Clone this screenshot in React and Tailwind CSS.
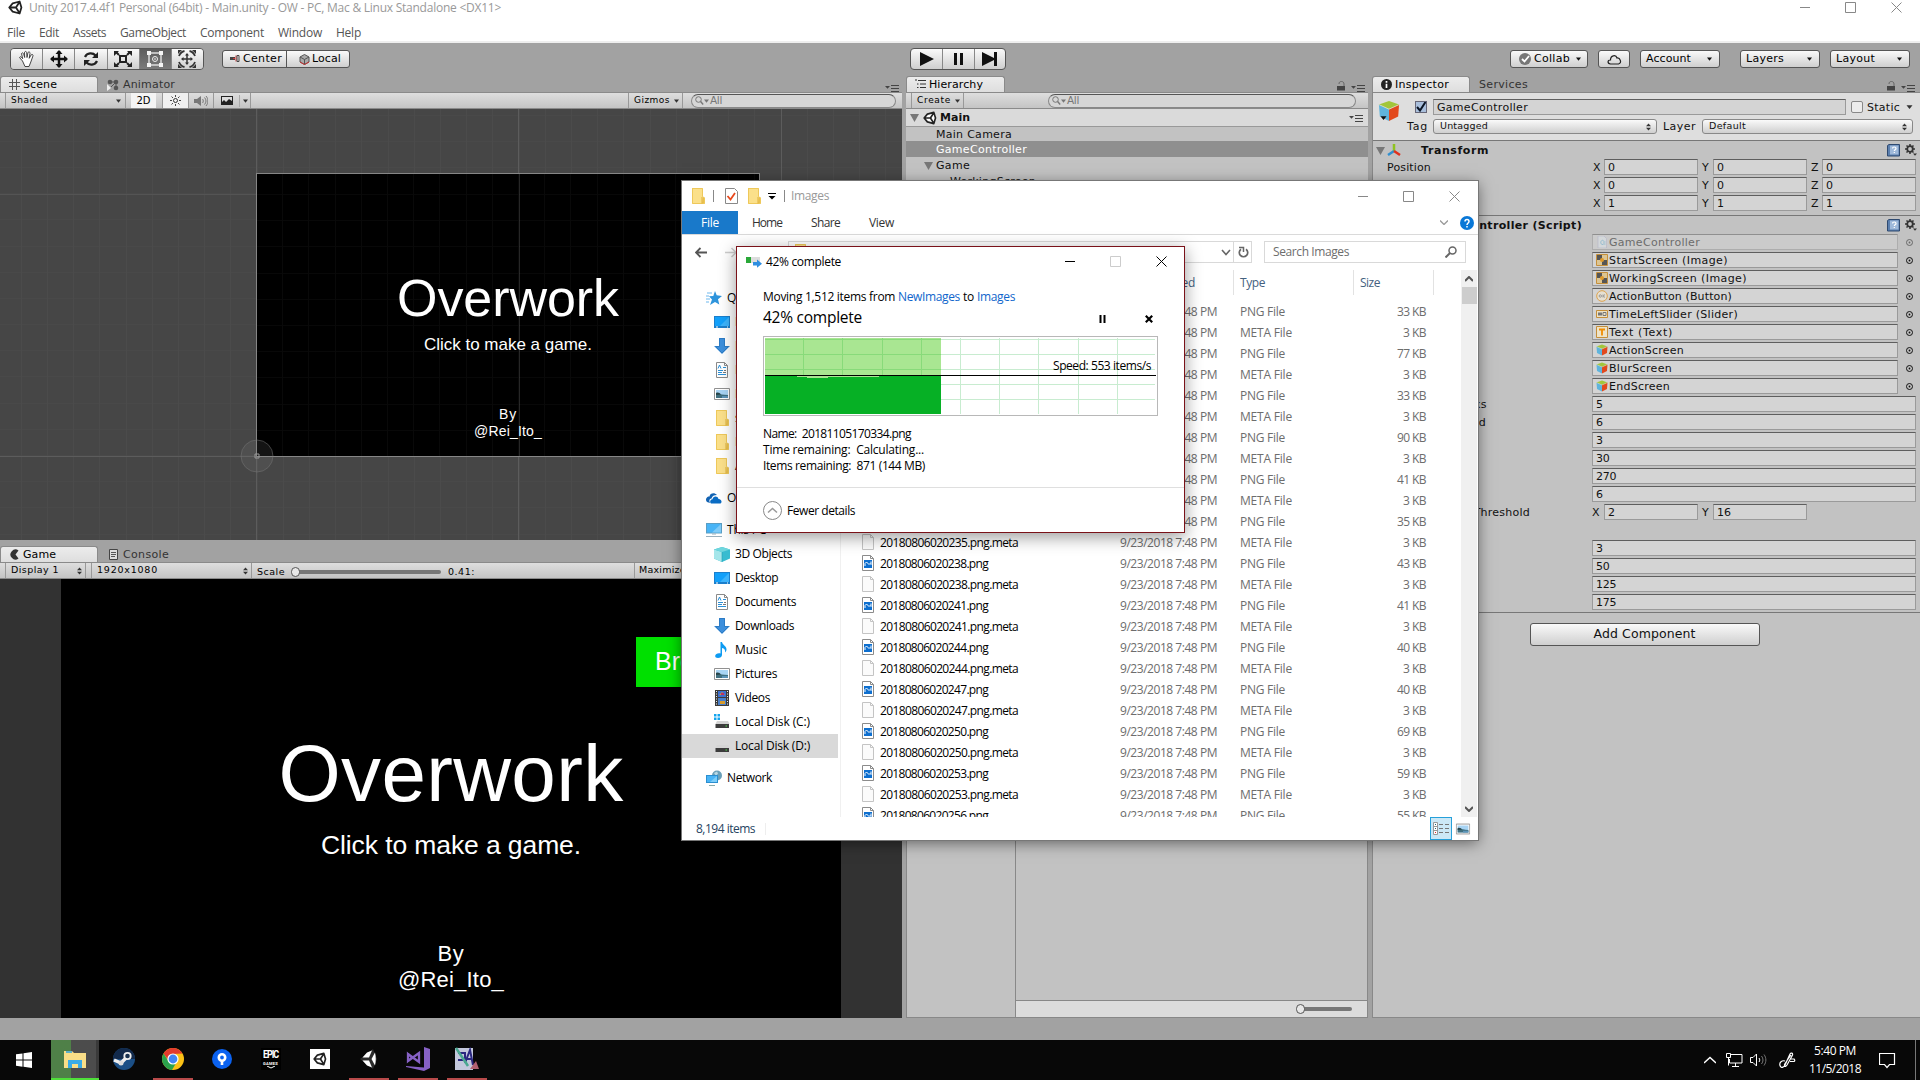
import React, { useLayoutEffect, useRef } from "react";

/* Text run whose letter spacing is tuned so the run fills `w` pixels. */
function Fit({ w, className = "", children }) {
  const ref = useRef(null);
  useLayoutEffect(() => {
    const el = ref.current;
    el.style.letterSpacing = "0px";
    const natural = el.getBoundingClientRect().width;
    el.style.letterSpacing = (w - natural) / el.textContent.length + "px";
  }, [w, children]);
  return (
    <span ref={ref} className={"inline-block shrink-0 whitespace-pre " + className}>
      {children}
    </span>
  );
}

/* ---------- small icons ---------- */
const Svg = ({ s = 16, h, vb, className = "", children }) => (
  <svg width={s} height={h || s} viewBox={vb || `0 0 ${s} ${h || s}`} className={"shrink-0 " + className} fill="none">
    {children}
  </svg>
);
const UnityLogo = ({ s = 16, c = "#222", bg = "none", className }) => (
  <Svg s={s} vb="0 0 16 16" className={className}>
    <path d="M1 8 5 3.2 13 1.2 15 8l-2 6.8L5 12.800z" fill={bg} />
    <path d="M1.300 8 5 3.600 12.400 1.600 14.300 8l-1.900 6.400L5 12.400zM1.300 8H8.500M8.500 8l3.900-6.200M8.500 8l3.900 6.200" stroke={c} strokeWidth="1.9" strokeLinejoin="round" />
  </Svg>
);
const Caret = ({ c = "#333", s = 5, className }) => (
  <Svg s={s} h={4} vb="0 0 6 4" className={className}><path d="M0 .3h6L3 4z" fill={c} /></Svg>
);
const UpDown = ({ className }) => (
  <Svg s={5} h={8} className={className}><path d="M0 3.300h5L2.500.5zM0 4.800h5L2.500 7.600z" fill="#333" /></Svg>
);
const PanelMenu = ({ className }) => (
  <Svg s={14} h={8} className={className}>
    <path d="M0 2h5L2.500 4.800z" fill="#444" /><path d="M6 1.500h8M6 4.500h8M6 7.500h8" stroke="#444" strokeWidth="1" />
  </Svg>
);
const Lock = ({ className }) => (
  <Svg s={8} h={10} className={className}><path d="M0 5h8v4.500H0z" fill="#444" /><path d="M2 3c0-2 1-2.500 2.500-2.500S7 1.500 7 3v2" stroke="#666" /></Svg>
);
const Glass = ({ className }) => (
  <Svg s={9} h={9} className={className}><circle cx="3.500" cy="3.500" r="2.800" stroke="#777" /><path d="m5.600 5.600 2.600 2.800" stroke="#777" strokeWidth="1.400" /></Svg>
);
const Cube = ({ s = 12, className }) => (
  <Svg s={s} vb="0 0 24 24" className={className}>
    <path d="M1 5 12 1l11 4-11 5z" fill="#a2c63a" /><path d="M1 5l11 5v13L2 18z" fill="#5fb4dc" /><path d="M23 5 12 10v13l10-5z" fill="#e2491d" />
    <path d="M1 5l11 5 11-5" stroke="#d8dcc0" strokeWidth="1" />
  </Svg>
);
const Folder = ({ s = 16, className }) => (
  <Svg s={s} vb="0 0 16 16" className={className}>
    <path d="M2 0h11v16H2z" fill="#fbe08a" /><path d="M13 9h1.500v7H12z" fill="#e8c04e" /><path d="M2 .5h10.500V8.500L14.500 10v5.500H2.500V.5z" stroke="#eec85a" />
    <path d="M12 9v6.500" stroke="#e0b23c" />
  </Svg>
);
const Monitor = () => (
  <Svg s={16}><path d="M0 2h16v12H0z" fill="#1b7fcc" /><path d="M1 3h14v9H1z" fill="#12a0fa" /><path d="M15 3v9H6z" fill="#3db4fc" /><path d="M2 13h2M13 13h1" stroke="#fff" /></Svg>
);
const Down = () => (
  <Svg s={16}><path d="M5 0h6v8h5l-8 8-8-8h5z" fill="#3d8fdc" /><path d="M5.500.5h5V8.500H14.500L8 15 1.500 8.500H5.500z" stroke="#2c7bc4" /></Svg>
);
const Doc = () => (
  <Svg s={16}><path d="M2.500.5h8l3 3v12h-11z" fill="#fff" stroke="#8a8a8a" /><path d="M10.500.5v3h3" stroke="#8a8a8a" /><path d="M4 6.500l1.500-3.500 1.500 3.500M9 5.500h3M4 8.500h5M4 10.500h4M4 12.500h8" stroke="#2b8fd6" /><path d="M10 8.500h2M9 10.500h3" stroke="#777" /></Svg>
);
const Pic = () => (
  <Svg s={16}><path d="M.5 2.500h15v11H.5z" fill="#fff" stroke="#919191" /><path d="M2 4h12v8H2z" fill="#a8d4f4" /><path d="M2 8c3-1 6 1 12 1v3H2z" fill="#3f6f7f" /><path d="M2 7c2-1 4 0 5 1.500L2 9z" fill="#27454a" /><path d="M8 10h6v2H8z" fill="#5b93b8" /></Svg>
);
const Music = () => (
  <Svg s={16}><path d="M6.500 0H8c.3 3 5 4 4.500 8-.5 1.500-1 2-1.500 2.500.5-2.500-.5-4-3-4.500V13c0 2-2 3-4 3-1.800 0-3-1-2.800-2.300C1.500 12 3.500 11 6.500 11.500z" fill="#0d9bf2" /></Svg>
);
const Video = () => (
  <Svg s={16}><path d="M1 0h14v16H1z" fill="#3a3a3a" /><path d="M4 1h8v6H4z" fill="#3c6fd0" /><path d="M4 8h8v7H4z" fill="#4a7fc8" /><path d="M5 5l3-3 3 3zM6 11h5v3H6z" fill="#d69a2c" /><path d="M7 3h3v2H7z" fill="#c03060" /><path d="M2.500 1v14M13.500 1v14" stroke="#eee" strokeDasharray="1 1.500" /></Svg>
);
const Cube3D = () => (
  <Svg s={16}><path d="M0 3.500 8 1l8 2.500v9L8 16l-8-3.500z" fill="#38bcd0" /><path d="M0 3.500 8 6v10l-8-3.500z" fill="#a5e6ea" /><path d="M0 3.500 8 1l8 2.500L8 6z" fill="#6fd6dd" /><path d="M8 6v10" stroke="#1f9db4" strokeWidth=".6" /></Svg>
);
const Disk = ({ win }) => (
  <Svg s={16}>
    {win && <path d="M0 0h2.500v2.500H0zM3.500 0H6v2.500H3.500zM0 3.500h2.500V6H0zM3.500 3.500H6V6H3.500z" fill="#12a4ee" />}
    <path d="M3 7h11l1.500 3h-14z" fill="#d4d4d4" /><path d="M1.500 10h13.500v4H1.500z" fill="#3c3c3c" /><path d="M11.500 12h1.500" stroke="#4fe04f" />
  </Svg>
);
const Pc = () => (
  <Svg s={16}><path d="M0 1h16v10.500H0z" fill="#5a9ec4" /><path d="M1 2h14v8.500H1z" fill="#48b4f6" /><path d="M15 2v8.500H6z" fill="#7fcbf8" /><path d="M6 12h4M0 14.500h16" stroke="#9ab0bd" /></Svg>
);
const Net = () => (
  <Svg s={16}><circle cx="11" cy="5.500" r="5" fill="#6a9fb8" /><path d="M8 3l3-1.500 1 2-2 2.500z" fill="#b9d8e4" /><path d="M0 5h12v8H0z" fill="#2b8fd0" /><path d="M1 6h10v6H1z" fill="#48b4f6" /><path d="M11 6v6H4z" fill="#7ccdf9" /><path d="M3 15.500h6" stroke="#8aa" /></Svg>
);
const Star = () => (
  <Svg s={16}><path d="M9 1l1.700 4.300L16 6l-4 3.200 1.300 5.300L9 12l-5 3 2-5.500L3 6.300 7.300 6z" fill="#2d94dc" /><path d="M1 3h5M0 6h3M0 9h4M0 12h3" stroke="#6cb8ee" /></Svg>
);
const OneDrive = () => (
  <Svg s={16}><path d="M1 12a3 3 0 0 1 0-4.500C2 6 3 6.500 3.500 6.500 4 3.500 8 2 11 5c-3 0-5 1-5.500 3.500C3 9 3 11 4 13z" fill="#1263b3" /><path d="M5 13.500c-2-2 0-4.500 1.500-4.200C7 6 11.500 5.500 12.500 9c3 0 4 3.500 2 4.500z" fill="#0a6cc4" /></Svg>
);
const PngFile = () => (
  <Svg s={12} h={16}><path d="M.5.5h8l3 3v12H.5z" fill="#fff" stroke="#8b8b8b" /><path d="M8.500.5v3h3" stroke="#8b8b8b" /><path d="M2 5h8v8H2z" fill="#0e6fcf" /><path d="M3 11V8.500l1.500-1.500L7 9.500l1-1L9 9.500V6.500" stroke="#fff" /></Svg>
);
const MetaFile = () => (
  <Svg s={12} h={16}><path d="M.5.5h8l3 3v12H.5z" fill="#fbfbfb" stroke="#c4c4c4" /><path d="M8.500.5v3h3" stroke="#c4c4c4" /></Svg>
);
const Gear = () => (
  <Svg s={12}><circle cx="5" cy="5" r="2.800" stroke="#333" strokeWidth="1.800" /><path d="M5 0v2M5 8v2M0 5h2M8 5h2M1.500 1.500l1.300 1.300M7.200 7.200 8.500 8.500M8.500 1.500 7.200 2.800M2.800 7.200 1.500 8.500" stroke="#333" strokeWidth="1.500" /><path d="M8 9.500h4l-2 2.300z" fill="#333" /></Svg>
);
const Book = () => (
  <Svg s={13}><path d="M.5 1.500 2 .5h10.500v11.500H.5z" fill="#5b7fae" stroke="#2f4a70" /><path d="M3 1.500h8.500v9H3z" fill="#9fb9da" /><path d="M5.500 4.500c0-2 3.500-2 3.500 0 0 1.300-1.700 1.200-1.700 2.500M7.300 8v1" stroke="#fff" strokeWidth="1.200" /></Svg>
);

/* ---------- Unity editor pieces ---------- */
const btn = "flex items-center border border-[#555] rounded-[3px] bg-linear-to-b from-[#fafafa] to-[#cfcfcf]";
const uni = "font-['DejaVu_Sans',sans-serif]";

/* Editor label: sits one pixel below the centre line of its row. */
const Label = ({ className = "", ...rest }) => <Fit className={"pt-[2px] " + className} {...rest} />;

function Tab({ icon, label, w, lw, active }) {
  return (
    <div className={(active ? "bg-linear-to-b from-[#ececec] to-[#dedede] border border-b-0 border-[#8a8a8a] rounded-t-[3px] text-black " : "pt-px pl-px text-[#333] ") + "flex h-4 shrink-0 items-center gap-1"}>
      <div className={"flex items-center pl-2 " + (active ? "gap-[3px]" : "gap-[4px]")} style={{ width: w }}>
        {icon}
        <Fit w={lw} className="text-[11px] leading-4">{label}</Fit>
      </div>
    </div>
  );
}

function Search({ className }) {
  return (
    <div className={"flex h-[14px] items-center rounded-full border border-[#888] border-t-[#555] bg-[#d6d6d6] pl-[3px] " + className}>
      <Glass /><Caret c="#777" s={5} />
      <Fit w={12} className="ml-px pb-px text-[10.500px] leading-3 text-[#777]">All</Fit>
    </div>
  );
}

const bar = "flex h-[17px] items-center border-t border-b border-[#8a8a8a] bg-linear-to-b from-[#dedede] to-[#c4c4c4] text-[10px]";

const tools = [
  <Svg s={20} key="hand"><path d="M5.500 12 2.500 8.500c.5-1.300 2-.8 3.200 1.200L4.500 4.500c.7-1.200 2-.5 2.200.8l1 3.200L7.500 3.200c.8-1.200 2-.7 2.200.3l.3 5 1-5c.8-1 2.200-.5 2 .8l-.8 5 2-3.500c1-.8 2-.2 1.800 1L13.800 13l-1.800 4.500H8z" fill="#fff" stroke="#333" strokeWidth=".9" /></Svg>,
  <Svg s={20} key="move"><path d="M10 2v16M2 10h16" stroke="#111" strokeWidth="2.500" /><path d="m10 1 3.500 4h-7zM10 19l3.500-4h-7zM1 10l4-3.500v7zM19 10l-4-3.500v7z" fill="#111" /></Svg>,
  <Svg s={20} key="rot"><path d="M4 8c2-4.500 8-4.500 10.500-1.500M16 12c-2 4.500-8 4.500-10.500 1.500" stroke="#222" strokeWidth="2.200" /><path d="M17 3v6h-6zM3 17v-6h6z" fill="#222" /></Svg>,
  <Svg s={20} key="scale"><path d="M7 7h6v6H7zM3 3l3 3M17 3l-3 3M3 17l3-3M17 17l-3-3" stroke="#222" strokeWidth="2" /><path d="M1 2h5L1 7zM19 2h-5l5 5zM1 18h5l-5-5zM19 18h-5l5-5z" fill="#222" /></Svg>,
  <Svg s={20} key="rect"><path d="M4 4h12v12H4z" stroke="#ddd" strokeWidth="1.500" /><path d="M2 2h4v4H2zM14 2h4v4h-4zM2 14h4v4H2zM14 14h4v4h-4z" fill="#f4f4f4" /><circle cx="10" cy="10" r="2.500" stroke="#eee" /><circle cx="10" cy="10" r=".8" fill="#fff" /></Svg>,
  <Svg s={20} key="all"><path d="M10 5v10M5 10h10" stroke="#333" strokeWidth="1.500" /><path d="m10 4 2 2.500h-4zM10 16l2-2.500h-4zM4 10l2.500-2v4zM16 10l-2.500-2v4z" fill="#333" /><path d="M2 7c1-2.500 3-4.500 5.500-5M18 7c-1-2.500-3-4.500-5.500-5M2 13c1 2.500 3 4.500 5.500 5M18 13c-1 2.500-3 4.500-5.500 5" stroke="#333" strokeWidth="1.800" /><path d="M1 1h4L1 5zM19 1h-4l4 4zM1 19h4l-4-4zM19 19h-4l4-4z" fill="#333" /></Svg>,
];

function TopBar() {
  return (
    <div className={"flex h-[33px] shrink-0 items-start pt-[5px] " + uni}>
      <div className="ml-[10px] flex h-[22px] w-[194px] overflow-hidden rounded-[4px] border border-[#555]">
        {tools.map((t, i) => (
          <div key={i} className={"flex flex-1 items-center justify-center " + (i ? "border-l border-[#888] " : "") + (i === 4 ? "bg-linear-to-b from-[#5c5c5c] to-[#7a7a7a]" : "bg-linear-to-b from-[#fafafa] to-[#cfcfcf]")}>{t}</div>
        ))}
      </div>
      <div className={btn + " mt-[2px] ml-[18px] h-[18px] w-[128px]"}>
        <div className="flex h-full w-[64px] items-center border-r border-[#555] pl-[7px]">
          <Svg s={10} h={8}><path d="M0 2h5v3H0z" fill="#444" /><path d="M6 .5v6M5 3.500H3" stroke="#c33" /><path d="M7 .5h2v6H7z" stroke="#444" /></Svg>
          <Fit w={39} className="ml-[3px] text-[11px]">Center</Fit>
        </div>
        <Svg s={11} className="ml-3"><path d="M1 3 5.500.5 10 3v5l-4.500 2.500L1 8z" fill="#aaa" stroke="#555" /><path d="M1 3l4.500 2.500L10 3M5.500 5.500v5" stroke="#555" /><path d="M1 8l4.500 2.500L10 8" stroke="#c33" /></Svg>
        <Fit w={29} className="ml-[2px] text-[11px]">Local</Fit>
      </div>
      <div className="ml-[560px] flex h-[22px] w-[96px] overflow-hidden rounded-[4px] border border-[#555] bg-linear-to-b from-[#fafafa] to-[#cfcfcf]">
        <div className="flex w-[32px] items-center justify-center border-r border-[#888]"><Svg s={14}><path d="M0 0v14l14-7z" fill="#111" /></Svg></div>
        <div className="flex w-[32px] items-center justify-center border-r border-[#888]"><Svg s={14}><path d="M2 1h3v12H2zM8 1h3v12H8z" fill="#111" /></Svg></div>
        <div className="flex flex-1 items-center justify-center"><Svg s={16} h={14}><path d="M0 0v14l12-6V14h3V0h-3v6z" fill="#111" /></Svg></div>
      </div>
      <div className={btn + " mt-[2px] ml-[504px] h-[18px] w-[78px] pl-2"}>
        <Svg s={12}><circle cx="6" cy="6" r="6" fill="#777" /><path d="m3 6 2.500 2.500L10 3" stroke="#fff" strokeWidth="1.800" /></Svg>
        <Fit w={36} className="ml-[3px] text-[11px]">Collab</Fit><Caret className="ml-[6px]" c="#111" />
      </div>
      <div className={btn + " mt-[2px] ml-[10px] h-[18px] w-[32px] justify-center"}>
        <Svg s={15} h={11}><path d="M3.500 10C0 9.500.5 6 3.500 6 3.500 1 9 .5 10 4c3-.5 5.500 5 1.500 6z" stroke="#222" strokeWidth="1.200" /></Svg>
      </div>
      {[["Account", 45, "ml-[10px]"], ["Layers", 38, "ml-5"], ["Layout", 39, "ml-[10px]"]].map(([t, w, m]) => (
        <div key={t} className={btn + " mt-[2px] h-[18px] w-[80px] justify-between pr-[7px] pl-[5px] " + m}>
          <Fit w={w} className="text-[11px]">{t}</Fit><Caret c="#111" />
        </div>
      ))}
    </div>
  );
}

function Scene() {
  return (
    <>
      <div className="flex h-4">
        <Tab active w={96} lw={34} label="Scene" icon={<Svg s={11}><path d="M3.500 0v11M7.500 0v11M0 3.500h11M0 7.500h11" stroke="#555" /></Svg>} />
        <Tab w={90} lw={52} label="Animator" icon={<Svg s={12}><circle cx="3" cy="3" r="2.300" fill="#555" /><circle cx="9" cy="3" r="2.300" fill="#555" /><circle cx="9" cy="9" r="2.300" fill="#555" /><path d="M3 3h6v6M4 8l5-5" stroke="#555" /><path d="M0 5l4 4-4 3z" fill="#eee" /></Svg>} />
        <div className="flex-1" />
        <PanelMenu className="mt-2 mr-[3px]" />
      </div>
      <div className={bar}>
        <div className="ml-[5px] flex h-full w-[121px] items-center justify-between border-x border-[#999] pr-1 pl-[5px]">
          <Fit w={37} className="text-[9px] text-black">Shaded</Fit><Caret />
        </div>
        <div className="ml-[5px] flex h-full w-[25px] items-center justify-center bg-[#f4f4f4]"><Fit w={14} className="text-[10px]">2D</Fit></div>
        <div className="ml-[6px] flex h-full w-[26px] items-center justify-center border-l border-[#999] bg-[#f0f0f0]">
          <Svg s={11}><circle cx="5.500" cy="5.500" r="2" stroke="#333" /><path d="M5.500 0v2M5.500 9v2M0 5.500h2M9 5.500h2M1.500 1.500 3 3M8 8l1.500 1.500M9.500 1.500 8 3M3 8 1.500 9.500" stroke="#333" strokeWidth=".9" /></Svg>
        </div>
        <div className="flex h-full w-[26px] items-center justify-center border-x border-[#999]">
          <Svg s={14} h={12}><path d="M0 4h3l4-3v10L3 8H0z" fill="#777" /><path d="M8.500 4c1 1 1 3 0 4M10.500 2.500c2 2 2 5 0 7M12 1c2.500 3 2.500 7 0 10" stroke="#777" /></Svg>
        </div>
        <div className="flex h-full w-[37px] items-center border-r border-[#999] pl-[7px]">
          <Svg s={12} h={10}><path d="M0 0h12v9H0z" fill="#222" /><path d="M1 1h10v4L8 3 5 6 3 4 1 6z" fill="#ddd" /></Svg>
          <div className="mr-[3px] ml-[6px] h-3 w-px bg-[#aaa]" /><Caret />
        </div>
        <div className="flex-1" />
        <div className="mr-2 flex h-full w-[55px] items-center gap-[4px] border-x border-[#999] pl-[5px]">
          <Fit w={36} className="text-[9px]">Gizmos</Fit><Caret />
        </div>
        <Search className="mr-[6px] w-[205px]" />
      </div>
      <div className="relative h-[431px] overflow-hidden bg-[#464646] bg-[repeating-linear-gradient(to_right,transparent_0_20.700px,#4b4b4b_20.700px_21.700px,transparent_21.700px_26.200px),repeating-linear-gradient(to_bottom,transparent_0_5.500px,#494949_5.500px_6.500px,transparent_6.500px_26.200px)] pt-[64px] pl-[256px]">
        <div className="absolute top-0 left-[256px] h-full w-px bg-[#5c5c5c]" />
        <div className="absolute top-0 left-[518px] h-full w-px bg-[#5c5c5c]" />
        <div className="absolute top-0 left-[781px] h-full w-px bg-[#5c5c5c]" />
        <div className="absolute top-[85px] left-0 h-px w-full bg-[#545454]" />
        <div className="absolute top-[347px] left-0 h-px w-full bg-[#5c5c5c]" />
        <div className="relative flex h-[284px] w-[504px] flex-col items-center border border-[#868686] bg-black bg-[repeating-linear-gradient(to_right,transparent_0_25.200px,#090909_25.200px_26.200px),repeating-linear-gradient(to_bottom,transparent_0_20px,#080808_20px_21px,transparent_21px_26.200px)] pt-[94px] font-['Liberation_Sans',sans-serif] text-white">
          <Fit w={222} className="text-[52px] leading-[60px]">Overwork</Fit>
          <Fit w={168} className="mt-[7px] text-[17px] leading-5">Click to make a game.</Fit>
          <Fit w={18} className="mt-[51px] text-[14px] leading-[17px]">By</Fit>
          <Fit w={68} className="text-[14px] leading-[17px]">@Rei_Ito_</Fit>
          <div className="absolute top-0 left-[262px] h-full w-px bg-white/15" />
        </div>
        <Svg s={34} className="absolute top-[330px] left-[240px]"><circle cx="17" cy="17" r="16" fill="#888" fillOpacity=".15" stroke="#777" strokeOpacity=".5" /><path d="M15 15h4v4h-4z" stroke="#999" /></Svg>
      </div>
    </>
  );
}

function Game() {
  return (
    <>
      <div className="mt-[6px] flex h-4">
        <Tab active w={96} lw={33} label="Game" icon={<Svg s={11}><path d="M9.500 1.500A5 5 0 1 0 9.500 9.500L6.500 5.500z" fill="#333" /></Svg>} />
        <Tab w={90} lw={46} label="Console" icon={<Svg s={12}><path d="M2.500.5h8v10h-8z" fill="#ddd" stroke="#444" /><path d="M4 3.500h5M4 5.500h5M4 7.500h4" stroke="#555" /></Svg>} />
      </div>
      <div className={bar}>
        <div className="ml-[5px] flex h-full w-[81px] items-center justify-between border-x border-[#999] pr-[3px] pl-[5px]"><Fit w={48} className="text-[9.500px]">Display 1</Fit><UpDown /></div>
        <div className="ml-[5px] flex h-full w-[161px] items-center justify-between border-x border-[#999] pr-[3px] pl-[5px]"><Fit w={61} className="text-[9.500px]">1920x1080</Fit><UpDown /></div>
        <Fit w={28} className="mt-[3px] ml-[5px] text-[9.500px]">Scale</Fit>
        <div className="relative mt-[3px] ml-[7px] h-1 w-[149px] rounded bg-[#777]"><div className="absolute -top-[3px] -left-px h-[10px] w-[9px] rounded-full border border-[#555] bg-[#e8e8e8]" /></div>
        <Fit w={27} className="mt-[3px] ml-[7px] text-[9.500px]">0.41:</Fit>
        <div className="ml-auto flex h-full w-[268px] items-center border-l border-[#999] pl-1"><Fit w={88} className="text-[9.500px]">Maximize On Play</Fit></div>
      </div>
      <div className="flex h-[439px] bg-[#323232] pl-[61px]">
        <div className="relative flex w-[780px] flex-col items-center bg-black pt-[150px] font-['Liberation_Sans',sans-serif] text-white">
          <div className="absolute top-[58px] right-[65px] flex h-[50px] w-[140px] items-center bg-[#00e000] pl-[19px] text-[25px]">Break</div>
          <Fit w={345} className="text-[80px] leading-[90px]">Overwork</Fit>
          <Fit w={260} className="mt-[11px] text-[26.500px] leading-[30px]">Click to make a game.</Fit>
          <Fit w={27} className="mt-[81px] text-[22px] leading-[26px]">By</Fit>
          <Fit w={106} className="text-[22px] leading-[26px]">@Rei_Ito_</Fit>
        </div>
      </div>
    </>
  );
}

function Middle() {
  return (
    <div className="ml-1 flex h-[942px] w-[462px] shrink-0 flex-col">
      <div className="flex h-4">
        <Tab active w={97} lw={54} label="Hierarchy" icon={<Svg s={11}><path d="M0 1h2M3 1.500h8M5 5h6M5 8.500h6M2 5h1.500M2 8.500h1.500" stroke="#333" /></Svg>} />
        <div className="flex-1" /><Lock className="mt-[5px]" /><PanelMenu className="mt-2 mr-[3px] ml-[6px]" />
      </div>
      <div className={bar}>
        <div className="ml-[5px] flex h-full w-[53px] items-center gap-[4px] border-x border-[#999] pl-[5px]"><Fit w={34} className="text-[9px]">Create</Fit><Caret /></div>
        <Search className="ml-auto mr-3 w-[308px]" />
      </div>
      <div className="flex h-[431px] flex-col bg-[#c2c2c2] text-[11px] text-[#111]">
        <div className="flex h-[18px] items-center border-b border-[#999] bg-[#dadada] pl-1">
          <Svg s={9}><path d="M0 1h9L4.500 9z" fill="#777" /></Svg><UnityLogo s={14} className="ml-[4px]" bg="#fff" />
          <Label w={30} className="ml-[3px] font-bold">Main</Label><PanelMenu className="mr-[5px] ml-auto" />
        </div>
        <div className="flex h-[14px] items-center pl-[30px]"><Label w={76}>Main Camera</Label></div>
        <div className="flex h-4 items-center bg-[#8f8f8f] pl-[30px] text-white"><Label w={91}>GameController</Label></div>
        <div className="flex h-4 items-center pl-[18px]"><Svg s={9}><path d="M0 1h9L4.500 9z" fill="#777" /></Svg><Label w={34} className="ml-[3px]">Game</Label></div>
        <div className="flex h-4 items-center pl-[44px]"><Label w={86}>WorkingScreen</Label></div>
      </div>
      <div className="mt-[22px] flex flex-1 border border-[#888] bg-[#c2c2c2]">
        <div className="w-[109px] border-r border-[#888]" />
        <div className="flex flex-1 flex-col justify-end">
          <div className="flex h-[17px] items-center justify-end border-t border-[#888] bg-[#dcdcdc] pr-[15px]">
            <div className="relative h-1 w-[52px] rounded bg-[#777]"><div className="absolute -top-[3px] -left-[4px] h-[10px] w-[9px] rounded-full border border-[#555] bg-[#e8e8e8]" /></div>
          </div>
        </div>
      </div>
    </div>
  );
}

const field = "flex h-4 items-center border border-[#9a9a9a] border-t-[#5e5e5e] bg-[#d4d4d4] pl-[3px] text-[11px] text-[#111]";
const numW = (t) => String(t).length * 6.8;

const ScriptIcon = <Svg s={12}><path d="M2 0h6l2.500 2.500V12H2z" fill="#e6eef2" stroke="#aac" strokeWidth=".6" /><path d="M7.500 4.500c-3-1.500-4 4.500-.5 4M7 6h2.500M7 8h2.500" stroke="#6fb8dc" /></Svg>;
const ImageIcon = <Svg s={12}><path d="M.5.500h11v11H.5z" fill="#dcc593" stroke="#c58f3a" /><path d="M1 1h5v5H1zM6 6h5v5H6z" fill="#555" /><circle cx="6" cy="6" r="2" fill="#e09a2a" /></Svg>;
const BtnIcon = <Svg s={12}><circle cx="6" cy="6" r="5.300" stroke="#dda24c" fill="#e6e0d2" /><circle cx="4.300" cy="6" r="1.200" stroke="#888" strokeWidth=".8" /><path d="M7 4.500v3M9 4.500 7.300 6 9 7.500" stroke="#888" strokeWidth=".8" /></Svg>;
const SliderIcon = <Svg s={12}><path d="M.5 2.500h11v7H.5z" fill="#eee3c8" stroke="#c58f3a" /><path d="M2 4.500h4v3H2z" fill="#777" /><path d="M7 4.500h3v3H7z" stroke="#777" /></Svg>;
const TextIcon = <Svg s={12}><path d="M.5.5h11v11H.5z" fill="#eee3c8" stroke="#c58f3a" /><path d="M3 3.500h6M6 3v6.500" stroke="#f08c00" strokeWidth="1.800" /></Svg>;

const objects = [
  ["GameController", 91, ScriptIcon], ["StartScreen (Image)", 119, ImageIcon], ["WorkingScreen (Image)", 138, ImageIcon],
  ["ActionButton (Button)", 123, BtnIcon], ["TimeLeftSlider (Slider)", 129, SliderIcon], ["Text (Text)", 64, TextIcon],
  ["ActionScreen", 75, <Cube key="a" />], ["BlurScreen", 63, <Cube key="b" />], ["EndScreen", 61, <Cube key="c" />],
];
const values = [["5", "Max Tasks", 60], ["6", "Tasks Needed", 90], ["3", ""], ["30", ""], ["270", ""], ["6", ""]];

function NumRow({ label, value, lw }) {
  return (
    <div className="mb-[2px] flex h-4">
      <div className="flex w-[220px] shrink-0 items-center pl-[15px] text-[11px]">{label && <div className="flex w-[100px] justify-end"><Label w={lw}>{label}</Label></div>}</div>
      <div className={field + " w-[324px]"}><Label w={numW(value)}>{value}</Label></div>
    </div>
  );
}

function Inspector() {
  return (
    <div className="ml-1 flex h-[942px] w-[548px] shrink-0 flex-col">
      <div className="flex h-4">
        <Tab active w={96} lw={54} label="Inspector" icon={<Svg s={11}><circle cx="5.500" cy="5.500" r="5.500" fill="#222" /><path d="M5.500 2v1.700M5.500 4.800v4.200" stroke="#fff" strokeWidth="1.700" /></Svg>} />
        <Tab w={80} lw={49} label="Services" />
        <div className="flex-1" /><Lock className="mt-[5px]" /><PanelMenu className="mt-2 mr-[5px] ml-[6px]" />
      </div>
      <div className="flex flex-1 flex-col border border-r-0 border-[#888] bg-[#c2c2c2] text-[11px] text-[#111]">
        <div className="flex h-12 border-b border-[#777] bg-[#dedede]">
          <div className="relative mt-[7px] ml-[5px] w-[37px]"><Cube s={22} /><Caret className="absolute top-[16px] left-[2px]" c="#111" s={7} /></div>
          <div className="flex flex-1 flex-col">
            <div className="mt-[6px] flex h-4 items-center">
              <div className="flex h-3 w-3 items-center justify-center border border-[#667] bg-[#a9bfdc]"><Svg s={10}><path d="m1 5 3 3.500L9.500 0" stroke="#0b1524" strokeWidth="2" /></Svg></div>
              <div className={field + " ml-[6px] w-[413px]"}><Label w={91}>GameController</Label></div>
              <div className="ml-[5px] h-3 w-3 rounded-[2px] border border-[#888] bg-[#ececec]" />
              <Label w={33} className="ml-[4px]">Static</Label><Caret className="ml-[5px]" s={9} />
            </div>
            <div className="mt-1 -ml-2 flex h-[15px] items-center">
              <Label w={21}>Tag</Label>
              <div className={btn + " ml-[5px] h-[15px] w-[224px] justify-between border-[#888] pr-[5px] pl-[6px] text-[9.500px]"}><Fit w={48}>Untagged</Fit><UpDown /></div>
              <Label w={33} className="ml-[6px]">Layer</Label>
              <div className={btn + " ml-[6px] h-[15px] w-[211px] justify-between border-[#888] pr-[5px] pl-[6px] text-[9.500px]"}><Fit w={37}>Default</Fit><UpDown /></div>
            </div>
          </div>
        </div>
        <div className="flex h-[18px] items-center pl-[3px]">
          <Svg s={9}><path d="M0 1h9L4.500 9z" fill="#777" /></Svg>
          <Svg s={14} className="ml-[2px]"><path d="M7 8V1" stroke="#8fc31f" strokeWidth="2.500" /><path d="m7 8-6 4" stroke="#2f8fd0" strokeWidth="2.500" /><path d="m7 8 6 4" stroke="#e0301e" strokeWidth="2.500" /></Svg>
          <Label w={68} className="ml-[20px] font-bold">Transform</Label>
          <div className="mr-[3px] ml-auto flex gap-[5px]"><Book /><Gear /></div>
        </div>
        {[["Position", 44, 0], ["Rotation", 46, 0], ["Scale", 28, 1]].map(([l, w, v]) => (
          <div key={l} className="mb-[2px] flex h-4 items-center">
            <div className="w-[220px] pl-[14px]"><Label w={w}>{l}</Label></div>
            {["X", "Y", "Z"].map((a) => (
              <div key={a} className="mr-[4px] flex w-[105px] items-center"><Label w={8} className="mr-[3px]">{a}</Label><div className={field + " flex-1"}><Label w={7}>{v}</Label></div></div>
            ))}
          </div>
        ))}
        <div className="mt-[2px] flex h-[19px] items-center border-t border-[#777] pl-[49px]">
          <Label w={160} className="font-bold">Game Controller (Script)</Label>
          <div className="mr-[3px] ml-auto flex gap-[5px]"><Book /><Gear /></div>
        </div>
        {objects.map(([t, w, ic], i) => (
          <div key={t} className={"mb-[2px] flex h-4 shrink-0 items-center pl-[219px] " + (i === 0 ? "opacity-50" : "")}>
            <div className={field + " w-[306px] gap-px"}>{ic}<Label w={w}>{t}</Label></div>
            <Svg s={9} className="ml-[7px]"><circle cx="4.500" cy="4.500" r="3" stroke="#111" /><circle cx="4.500" cy="4.500" r=".9" fill="#111" /></Svg>
          </div>
        ))}
        {values.map(([v, l, w], i) => <div key={i} className="-ml-px"><NumRow value={v} label={l} lw={w} /></div>)}
        <div className="mb-5 flex h-4 items-center">
          <div className="flex w-[219px] shrink-0 pl-[64px]"><Label w={93}>Break Threshold</Label></div>
          <Label w={8} className="mr-1">X</Label><div className={field + " w-[94px]"}><Label w={7}>2</Label></div>
          <Label w={8} className="mr-[3px] ml-[4px]">Y</Label><div className={field + " w-[94px]"}><Label w={14}>16</Label></div>
        </div>
        {["3", "50", "125", "175"].map((v) => <div key={v} className="-ml-px"><NumRow value={v} /></div>)}
        <div className="flex justify-center border-t border-[#777] pt-[10px] pr-1">
          <div className={btn + " h-[23px] w-[230px] justify-center text-[12.500px]"}><Fit w={102}>Add Component</Fit></div>
        </div>
      </div>
    </div>
  );
}

/* ---------- Windows pieces ---------- */
const seg = "font-['Open_Sans','Noto_Sans',sans-serif]";

function WinButtons({ c, className, dim }) {
  return (
    <div className={"flex items-center gap-[35px] " + className}>
      <Svg s={10} h={11}><path d="M0 5.500h10" stroke={c} /></Svg>
      <Svg s={11}><path d="M.5.500h10v10H.5z" stroke={dim || c} /></Svg>
      <Svg s={11}><path d="m.5.500 10 10M10.500.5l-10 10" stroke={c} /></Svg>
    </div>
  );
}

const nav = [
  ["Quick access", 65, <Star />, 0, 0], ["Desktop", 42, <Monitor />, 1, 0], ["Downloads", 59, <Down />, 1, 0], ["Documents", 61, <Doc />, 1, 0],
  ["Pictures", 42, <Pic />, 1, 0], ["screens", 40, <Folder />, 1, 0], ["Images", 38, <Folder />, 1, 0], ["Assets", 36, <Folder />, 1, 0],
  ["OneDrive", 50, <OneDrive />, 0, 1], ["This PC", 39, <Pc />, 0, 1], ["3D Objects", 57, <Cube3D />, 1, 0], ["Desktop", 43, <Monitor />, 1, 0],
  ["Documents", 61, <Doc />, 1, 0], ["Downloads", 59, <Down />, 1, 0], ["Music", 32, <Music />, 1, 0], ["Pictures", 42, <Pic />, 1, 0],
  ["Videos", 35, <Video />, 1, 0], ["Local Disk (C:)", 75, <Disk win />, 1, 0], ["Local Disk (D:)", 75, <Disk />, 1, 0], ["Network", 45, <Net />, 0, 1],
];
const sizes = [33, 77, 33, 90, 41, 35, 43, 41, 40, 40, 69, 59, 55];
const files = sizes.flatMap((s, i) => {
  const n = "201808060202" + (20 + i * 3);
  return [[n + ".png", 108, "PNG File", 45, s + " KB"], [n + ".png.meta", 138, "META File", 52, "3 KB"]];
}).slice(0, 25);

function Explorer() {
  return (
    <div className={"absolute top-[181px] left-[682px] flex h-[659px] w-[796px] flex-col bg-white text-[12px] shadow-[0_0_0_1px_#777,0_3px_14px_rgba(0,0,0,.5)] " + seg}>
      <div className="flex h-[30px] items-center pl-2">
        <Folder /><div className="ml-[7px] h-3 w-px bg-[#888]" />
        <Svg s={13} h={16} className="ml-[11px]"><path d="M.5.500h9l3 3v12H.5z" fill="#fff" stroke="#888" /><path d="m2.500 8 3 3.500L10 5" stroke="#e8481c" strokeWidth="1.800" /></Svg>
        <Folder className="ml-[8px]" />
        <Svg s={8} h={7} className="ml-[6px]"><path d="M0 .5h8" stroke="#000" /><path d="M.5 3h7L4 6.500z" fill="#000" /></Svg>
        <div className="ml-2 h-3 w-px bg-[#888]" />
        <Fit w={38} className="ml-[6px] text-[#999]">Images</Fit>
        <WinButtons c="#888" className="mr-[18px] ml-auto" />
      </div>
      <div className="flex h-6 shrink-0 items-center border-b border-[#dadada] text-[#333]">
        <div className="flex h-[23px] w-14 items-center justify-center bg-[#1979ca] pt-px text-white"><Fit w={18}>File</Fit></div>
        <Fit w={30} className="ml-[14px] pt-px">Home</Fit><Fit w={29} className="ml-[29px] pt-px">Share</Fit><Fit w={25} className="ml-[29px] pt-px">View</Fit>
        <Svg s={8} h={5} className="mr-3 ml-auto"><path d="m0 .5 4 4 4-4" stroke="#999" strokeWidth="1.300" /></Svg>
        <Svg s={14} className="mr-[4px]"><circle cx="7" cy="7" r="7" fill="#0a78d7" /><path d="M5 5.500c0-2.700 4-2.700 4 0C9 7 7 7 7 9M7 10v1.500" stroke="#fff" strokeWidth="1.500" /></Svg>
      </div>
      <div className="mt-[6px] flex h-[22px] shrink-0 items-center">
        <Svg s={12} h={11} className="ml-[13px]"><path d="M12 5.500H1M5.500 1 1 5.500 5.500 10" stroke="#555" strokeWidth="1.800" /></Svg>
        <Svg s={12} h={11} className="ml-[18px]"><path d="M0 5.500h11M6.500 1 11 5.500 6.500 10" stroke="#ccc" strokeWidth="1.500" /></Svg>
        <div className="ml-[51px] flex h-[22px] w-[464px] items-center border border-[#d9d9d9] pl-1">
          <Folder s={16} />
          <Svg s={10} h={7} className="mr-[2px] ml-auto"><path d="m1 1 4 4.500L9 1" stroke="#666" strokeWidth="1.600" /></Svg>
          <div className="h-full w-px bg-[#d9d9d9]" />
          <Svg s={11} h={13} className="mr-[2px] ml-[4px]"><path d="M8 3.200A4.200 4.200 0 1 1 3 3.200" stroke="#666" strokeWidth="1.700" /><path d="M1 1.500h4.500V6" stroke="#666" strokeWidth="1.500" /></Svg>
        </div>
        <div className="ml-3 flex h-[22px] w-[202px] items-center justify-between border border-[#d9d9d9] pr-2 pl-2 text-[#6d6d6d]">
          <Fit w={76}>Search Images</Fit>
          <Svg s={12}><circle cx="7.500" cy="4.500" r="3.500" stroke="#666" strokeWidth="1.500" /><path d="M5 7 .5 11.500" stroke="#666" strokeWidth="2" /></Svg>
        </div>
      </div>
      <div className="mt-[7px] flex h-[547px] shrink-0">
        <div className="flex h-full w-[159px] shrink-0 flex-col border-r border-[#f0f0f0] pt-4 text-black">
          {nav.map(([t, w, ic, sub, gap], i) => (
            <div key={i} className={"flex h-6 w-[156px] shrink-0 items-center " + (sub ? "gap-[5px] pl-8 " : "gap-[5px] pl-6 ") + (gap ? "mt-2 " : "") + (i === 18 ? "bg-[#d9d9d9]" : "")}>
              {ic}<Fit w={w}>{t}</Fit>
            </div>
          ))}
        </div>
        <div className="flex h-full w-[621px] flex-col overflow-hidden">
          <div className="flex h-[25px] shrink-0 items-center text-[#44617f]">
            <div className="flex h-full w-[270px] items-center pl-[39px]"><Fit w={30}>Name</Fit></div>
            <div className="flex h-full w-[123px] items-center border-r border-[#e2e2e2] pl-[9px]"><Fit w={75}>Date modified</Fit></div>
            <div className="flex h-full w-[120px] items-center border-r border-[#e2e2e2] pl-[6px]"><Fit w={25}>Type</Fit></div>
            <div className="flex h-full w-[80px] items-center border-r border-[#e2e2e2] pl-[6px]"><Fit w={20}>Size</Fit></div>
          </div>
          <div className="pt-[5px]">
            {files.map(([n, nw, ty, tw, s], i) => (
              <div key={i} className="flex h-[21px] items-center text-[#6d6d6d]">
                <div className="flex w-[279px] items-center gap-[6px] pl-[21px] text-black">{i % 2 ? <MetaFile /> : <PngFile />}<Fit w={nw} className="pt-[2px]">{n}</Fit></div>
                <div className="w-[120px]"><Fit w={97} className="pt-[2px]">9/23/2018 7:48 PM</Fit></div>
                <div className="w-[100px]"><Fit w={tw} className="pt-[2px]">{ty}</Fit></div>
                <div className="flex w-[86px] justify-end"><Fit w={s.length === 4 ? 23 : 29} className="pt-[2px]">{s}</Fit></div>
              </div>
            ))}
          </div>
        </div>
        <div className="-ml-px flex w-4 flex-col items-center bg-[#f0f0f0]">
          <Svg s={8} h={6} className="mt-[6px]"><path d="m0 5 4-4 4 4" stroke="#555" strokeWidth="2" /></Svg>
          <div className="mt-[5px] h-[17px] w-[15px] bg-[#cdcdcd]" />
          <Svg s={8} h={6} className="mt-auto mb-[5px]"><path d="m0 1 4 4 4-4" stroke="#555" strokeWidth="2" /></Svg>
        </div>
      </div>
      <div className="flex h-[23px] items-center pl-[14px] text-[#26435f]">
        <Fit w={59}>8,194 items</Fit><div className="ml-[10px] h-3 w-px bg-[#eee]" />
        <div className="ml-auto flex h-[23px] w-[22px] items-center justify-center border border-[#26a0da] bg-[#cce8f6]">
          <Svg s={16} h={13}><path d="M.5.5h4v12h-4zM.5 4.500h4M.5 8.500h4" fill="#fff" stroke="#999" /><path d="M2 2.500h1M2 6.500h1" stroke="#267" /><path d="M2 10.500h1" stroke="#e22" /><path d="M6 2.500h4M12 2.500h4M6 6.500h4M12 6.500h4M6 10.500h4M12 10.500h4" stroke="#777" /></Svg>
        </div>
        <div className="mr-[7px] ml-[3px] scale-90"><Pic /></div>
      </div>
    </div>
  );
}

function Progress() {
  return (
    <div className={"absolute top-[246px] left-[736px] flex h-[287px] w-[449px] flex-col border border-[#7a1219] bg-white text-[12px] text-black shadow-[0_4px_16px_rgba(0,0,0,.4)] " + seg}>
      <div className="flex h-[30px] items-center pl-[9px]">
        <Svg s={16} h={12}><path d="M0 1h14v6H0z" fill="#ddd" /><path d="M0 1h5v6H0z" fill="#2aa838" /><path d="M7 6h4V3.500l5 4.300-5 4V9.500H7z" fill="#2f8ee0" /></Svg>
        <Fit w={75} className="ml-1">42% complete</Fit>
        <WinButtons c="#000" dim="#ccc" className="mr-[17px] mb-px ml-auto" />
      </div>
      <div className="mt-[10px] flex h-5 items-center pl-[26px]">
        <Fit w={135}>Moving 1,512 items from </Fit><Fit w={62} className="text-[#0f66cc]">NewImages</Fit><Fit w={17}> to </Fit><Fit w={38} className="text-[#0f66cc]">Images</Fit>
      </div>
      <div className="flex h-[23px] items-center pl-[26px]">
        <Fit w={99} className="pb-[2px] text-[15.500px]">42% complete</Fit>
        <Svg s={8} h={8} className="ml-[237px]"><path d="M1.500 0v8M5.500 0v8" stroke="#000" strokeWidth="2" /></Svg>
        <Svg s={8} h={8} className="ml-[38px]"><path d="m.8.800 6.400 6.400M7.200.8.800 7.200" stroke="#000" strokeWidth="2.200" /></Svg>
      </div>
      <div className="relative mt-[6px] ml-[26px] h-[80px] w-[395px] border border-[#b8b8b8]">
        <svg width="393" height="78" viewBox="0 0 393 78" className="block">
          <rect x="1" y="1" width="176" height="76" fill="#a9e692" />
          {[39, 78, 118, 157].map((x) => <path key={x} d={`M${x}.5 1v38`} stroke="#88da7a" />)}
          {[196, 235, 274, 314, 353].map((x) => <path key={x} d={`M${x}.5 1v76`} stroke="#c8ecd0" />)}
          {[2, 17, 32, 47, 62].map((y) => <g key={y}><path d={`M177 ${y}.5h214`} stroke="#c8ecd0" />{y < 38 && <path d={`M1 ${y}.5h176`} stroke="#88da7a" />}</g>)}
          <rect x="1" y="39" width="176" height="38" fill="#06b025" />
          <path d="M33 39.500h82M43 40.500h21" stroke="#a9e692" /><path d="M1 38.500h391" stroke="#000" />
        </svg>
        <Fit w={98} className="absolute top-[20px] right-[6px] leading-[18px]">Speed: 553 items/s</Fit>
      </div>
      <div className="mt-[10px] flex h-12 flex-col items-start pl-[26px] leading-4">
        <Fit w={148}>Name:  20181105170334.png</Fit><Fit w={161}>Time remaining:  Calculating...</Fit><Fit w={162}>Items remaining:  871 (144 MB)</Fit>
      </div>
      <div className="mt-[13px] flex flex-1 items-center border-t border-[#dfdfdf] pt-px pl-[26px]">
        <Svg s={19}><circle cx="9.500" cy="9.500" r="9" stroke="#888" fill="#fff" /><path d="m5 11.500 4.500-4 4.500 4" stroke="#999" strokeWidth="1.500" /></Svg>
        <Fit w={68} className="ml-[5px]">Fewer details</Fit>
      </div>
    </div>
  );
}

/* ---------- taskbar ---------- */
function Task({ children, run }) {
  return <div className="flex h-10 w-[49px] flex-col items-center"><div className="flex h-[38px] items-center">{children}</div>{run && <div className="h-[2px] w-10 bg-[#b84a4a]" />}</div>;
}
function Taskbar() {
  return (
    <div className={"flex h-10 shrink-0 bg-[#080808] text-white " + seg}>
      <div className="flex w-[51px] items-center pl-4"><Svg s={16}><path d="M0 2.300 6.500 1.400v6.200H0zM7.500 1.200 16 0v7.600H7.500zM0 8.500h6.500v6.200L0 13.800zM7.500 8.500H16V16l-8.500-1.200z" fill="#fff" /></Svg></div>
      <div className="flex w-12 flex-col">
        <div className="flex h-[38px] items-center justify-center border-r-[3px] border-r-[#3a3a3a] bg-linear-to-r from-[#4f8048] from-[44%] to-[#4c4c4c] to-[44%]">
          <Svg s={22} h={18} className="ml-[3px]"><path d="M0 1h8l2 2h12v15H0z" fill="#f9de87" /><path d="M2 2h6" stroke="#2a9fe0" strokeWidth="1.500" /><path d="M4 10h14v8h-4v-4H8v4H4z" fill="#3aabe6" /></Svg>
        </div>
        <div className="h-[2px] bg-[#4fe03a]" />
      </div>
      <Task><Svg s={22}><circle cx="11" cy="11" r="11" fill="#1b4f86" /><path d="M0 11a11 11 0 0 1 22 0z" fill="#122a4c" /><path d="m1 12 7 3 6-6" stroke="#eee" strokeWidth="3.500" /><circle cx="14.500" cy="8" r="3.200" fill="#17304f" stroke="#eee" strokeWidth="1.800" /><circle cx="8" cy="15" r="2.500" fill="#ddd" /></Svg></Task>
      <Task run><Svg s={22}><circle cx="11" cy="11" r="11" fill="#fbc116" /><path d="M1.500 5.500a11 11 0 0 1 19 0L11 6l-4 7z" fill="#e33b2e" /><path d="M1.500 5.500A11 11 0 0 0 10 22l5-8.500-8 .5z" fill="#2ba24c" /><circle cx="11" cy="11" r="5" fill="#4285f4" stroke="#fff" strokeWidth="1.200" /></Svg></Task>
      <Task><Svg s={20}><circle cx="10" cy="10" r="10" fill="#0b62f0" /><circle cx="10" cy="8.500" r="3.200" stroke="#fff" strokeWidth="2.600" /><path d="M10 11v5" stroke="#fff" strokeWidth="2.600" /></Svg></Task>
      <Task><div className="flex h-[22px] w-5 flex-col items-center bg-black font-['Roboto',sans-serif] font-bold"><Fit w={15} className="h-[13px] scale-y-125 text-[9px] leading-[13px]">EPIC</Fit><Fit w={15} className="text-[4px] leading-[5px]">GAMES</Fit><Svg s={8} h={3}><path d="m0 0 4 2 4-2" stroke="#fff" /></Svg></div></Task>
      <Task><div className="flex h-5 w-5 items-center justify-center bg-white"><UnityLogo s={14} /></div></Task>
      <Task run><Svg s={22}><path d="M2 11 15 1l4 10-4 10z" fill="#2c2c2c" /><path d="M11 9.500H4.500L9 4.500 14 2.500zM11 12.500H4.500L9 17.500l5 2zM13.500 11 17 4.500c1 4 1 9 0 13z" fill="#fff" /></Svg></Task>
      <Task run><Svg s={24}><path d="M18 0l6 2v19l-6 3L0 20v-1l18 1.500z" fill="#8661c5" /><path d="M2 7v7l4-3.500zM2 7l11 8V6L2 14" stroke="#8661c5" strokeWidth="2.300" /></Svg></Task>
      <Task run><Svg s={24}><path d="M0 1h18v22H0z" fill="#c3c8dc" /><path d="M3 6h7v7H3M10 16 15 3l3 15M11 12h6" stroke="#2a2780" strokeWidth="2" /><path d="m1 1 12 18" stroke="#4aa890" strokeWidth="2.500" /><path d="m15 22 6-8 3 8z" fill="#b06070" /></Svg></Task>
      <div className="ml-auto flex items-center">
        <Svg s={12} h={8}><path d="m0 7 6-5.500L12 7" stroke="#fff" strokeWidth="1.400" /></Svg>
        <Svg s={17} h={14} className="ml-[10px]"><path d="M5 1.500h11v8.500H3.500V6M9.500 10v3M6 13.500h7M.5.500h4v4h-4zM2.500 4.500v8" stroke="#fff" /></Svg>
        <Svg s={17} h={14} className="ml-[7px]"><path d="M.5 4.500h2.500L6.500 1v12L3 9.500H.5z" stroke="#fff" /><path d="M9 5c1 1.500 1 2.500 0 4" stroke="#fff" /><path d="M11.500 3c2 2.500 2 5.500 0 8M14 1.500c2.500 3.500 2.500 7.500 0 11" stroke="#777" /></Svg>
        <Svg s={17} h={17} className="ml-[12px]"><path d="M6 9c-3-1-6 1.500-5 4.500C2 17 6 15 6.500 12L11 2c1-1.500 3-1 2.500 1L8 13c-2 3-4 1-1-3l5-7M11 7h4c1 1 1 2 0 2.500h-4" stroke="#fff" strokeWidth="1.200" /></Svg>
        <div className="ml-[13px] flex w-[52px] flex-col items-center text-[12px] leading-[18px]"><Fit w={42}>5:40 PM</Fit><Fit w={52}>11/5/2018</Fit></div>
        <Svg s={17} className="ml-[18px]"><path d="M.5 1.500h15v11h-5l-2.500 3-2.500-3h-5z" stroke="#fff" strokeWidth="1.200" /></Svg>
        <div className="mr-1 ml-[19px] h-10 w-px bg-[#777]" />
      </div>
    </div>
  );
}

export default function App() {
  return (
    <div className="relative flex h-[1080px] w-[1920px] flex-col overflow-hidden bg-[#a2a2a2]">
      <div className={"flex h-[17px] shrink-0 items-center bg-white pl-2 text-[12px] text-[#999] " + seg}>
        <UnityLogo s={15} bg="#fff" className="mb-[2px]" />
        <Fit w={472} className="ml-[6px] pb-px leading-4">{"Unity 2017.4.4f1 Personal (64bit) - Main.unity - OW - PC, Mac & Linux Standalone <DX11>"}</Fit>
        <WinButtons c="#888" className="mr-[18px] mb-[2px] ml-auto" />
      </div>
      <div className={"flex h-[26px] shrink-0 items-center gap-[14px] border-b-2 border-[#eee] bg-white pt-[7px] pl-[7px] text-[12px] text-[#555] " + seg}>
        {[["File", 18], ["Edit", 20], ["Assets", 33], ["GameObject", 66], ["Component", 64], ["Window", 44], ["Help", 25]].map(([t, w]) => <Fit key={t} w={w}>{t}</Fit>)}
      </div>
      <TopBar />
      <div className={"flex h-[942px] shrink-0 " + uni}>
        <div className="flex w-[902px] shrink-0 flex-col"><Scene /><Game /></div>
        <Middle />
        <Inspector />
      </div>
      <div className="h-[22px] shrink-0 bg-[#a2a2a2]" />
      <Taskbar />
      <Explorer />
      <Progress />
    </div>
  );
}
